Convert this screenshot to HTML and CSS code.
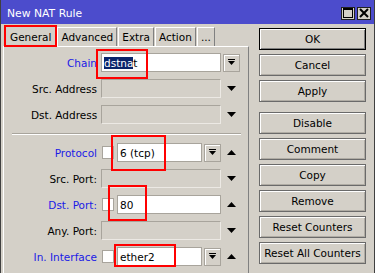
FILE: index.html
```html
<!DOCTYPE html>
<html>
<head>
<meta charset="utf-8">
<link rel="stylesheet" href="styles.css">
</head>
<body>
<div class="window">
  <div class="titlebar">
    <span class="title">New NAT Rule</span>
    <div class="tb-btns">
      <span class="tb-btn"><svg width="10" height="10" viewBox="0 0 10 10"><rect x="0.5" y="0.5" width="9" height="9" fill="none" stroke="#000" stroke-width="1"/><rect x="0" y="0" width="10" height="2" fill="#000"/></svg></span>
      <span class="tb-btn"><svg width="10" height="10" viewBox="0 0 10 10"><path d="M1 1 L9 9 M9 1 L1 9" stroke="#000" stroke-width="2"/></svg></span>
    </div>
  </div>
  <div class="main">
    <div class="left">
      <div class="tabs">
        <div class="tab active">General</div>
        <div class="tab">Advanced</div>
        <div class="tab">Extra</div>
        <div class="tab">Action</div>
        <div class="tab">...</div>
      </div>
      <div class="panel">
        <div class="row">
          <span class="lbl blue">Chain</span>
          <div class="field"><div class="input white"><span class="sel">dstna</span>t</div></div>
          <div class="ind"><span class="ddbtn"><svg width="7" height="7" viewBox="0 0 7 7"><rect x="0" y="0" width="7" height="1" fill="#000"/><polygon points="0,2 7,2 3.5,6" fill="#000"/></svg></span></div>
        </div>
        <div class="row">
          <span class="lbl">Src. Address</span>
          <div class="field"><div class="input dis"></div></div>
          <div class="ind"><svg class="arr" width="9" height="5" viewBox="0 0 9 5"><polygon points="0,0 9,0 4.5,5" fill="#000"/></svg></div>
        </div>
        <div class="row">
          <span class="lbl">Dst. Address</span>
          <div class="field"><div class="input dis"></div></div>
          <div class="ind"><svg class="arr" width="9" height="5" viewBox="0 0 9 5"><polygon points="0,0 9,0 4.5,5" fill="#000"/></svg></div>
        </div>
        <div class="sep"></div>
        <div class="row">
          <span class="lbl blue">Protocol</span>
          <div class="field"><span class="chk"></span><div class="input white">6 (tcp)</div><span class="ddbtn"><svg width="7" height="7" viewBox="0 0 7 7"><rect x="0" y="0" width="7" height="1" fill="#000"/><polygon points="0,2 7,2 3.5,6" fill="#000"/></svg></span></div>
          <div class="ind"><svg class="arr" width="9" height="5" viewBox="0 0 9 5"><polygon points="0,5 9,5 4.5,0" fill="#000"/></svg></div>
        </div>
        <div class="row">
          <span class="lbl">Src. Port:</span>
          <div class="field"><div class="input dis"></div></div>
          <div class="ind"><svg class="arr" width="9" height="5" viewBox="0 0 9 5"><polygon points="0,0 9,0 4.5,5" fill="#000"/></svg></div>
        </div>
        <div class="row">
          <span class="lbl blue">Dst. Port:</span>
          <div class="field"><span class="chk"></span><div class="input white">80</div></div>
          <div class="ind"><svg class="arr" width="9" height="5" viewBox="0 0 9 5"><polygon points="0,5 9,5 4.5,0" fill="#000"/></svg></div>
        </div>
        <div class="row">
          <span class="lbl">Any. Port:</span>
          <div class="field"><div class="input dis"></div></div>
          <div class="ind"><svg class="arr" width="9" height="5" viewBox="0 0 9 5"><polygon points="0,0 9,0 4.5,5" fill="#000"/></svg></div>
        </div>
        <div class="row">
          <span class="lbl blue">In. Interface</span>
          <div class="field"><span class="chk"></span><div class="input white">ether2</div><span class="ddbtn"><svg width="7" height="7" viewBox="0 0 7 7"><rect x="0" y="0" width="7" height="1" fill="#000"/><polygon points="0,2 7,2 3.5,6" fill="#000"/></svg></span></div>
          <div class="ind"><svg class="arr" width="9" height="5" viewBox="0 0 9 5"><polygon points="0,5 9,5 4.5,0" fill="#000"/></svg></div>
        </div>
      </div>
    </div>
    <div class="buttons">
      <div class="btn default">OK</div>
      <div class="btn">Cancel</div>
      <div class="btn">Apply</div>
      <div class="btn spaced">Disable</div>
      <div class="btn">Comment</div>
      <div class="btn">Copy</div>
      <div class="btn">Remove</div>
      <div class="btn">Reset Counters</div>
      <div class="btn">Reset All Counters</div>
    </div>
  </div>
</div>
<div class="mark m-general"></div>
<div class="mark m-chain"></div>
<div class="mark m-proto"></div>
<div class="mark m-dport"></div>
<div class="mark m-iface"></div>
</body>
</html>
```

FILE: styles.css
```css
html, body {
  margin: 0;
  padding: 0;
  overflow: hidden;
}
body {
  font-family: "DejaVu Sans", sans-serif;
  font-size: 10.5px;
  color: #000;
  background: #d4d0c8;
}
.window {
  width: 375px;
  height: 273px;
  box-sizing: border-box;
  background: #d4d0c8;
  border-left: 1px solid #404040;
  border-right: 1px solid #404040;
  overflow: hidden;
}
.titlebar {
  height: 24px;
  box-sizing: border-box;
  background: #4c4ccc;
  color: #fff;
  display: flex;
  align-items: center;
  justify-content: space-between;
  padding: 2px 3px 0 6px;
}
.title {
  font-size: 10.8px;
}
.tb-btns {
  display: flex;
  gap: 2px;
}
.tb-btn {
  width: 14px;
  height: 13px;
  box-sizing: border-box;
  border: 1px solid #202020;
  background: #d4d0c8;
  display: flex;
  align-items: center;
  justify-content: center;
}
.main {
  display: flex;
  padding: 1px 0 0 2px;
}
.left {
  width: 246px;
  display: flex;
  flex-direction: column;
}
.tabs {
  display: flex;
  height: 21px;
  padding-left: 2px;
  align-items: flex-end;
  gap: 1px;
}
.tab {
  height: 19px;
  box-sizing: border-box;
  padding: 0 3px;
  border-top: 1px solid #fff;
  border-left: 1px solid #fff;
  border-right: 1px solid #808080;
  display: flex;
  align-items: center;
}
.tab.active {
  height: 21px;
  padding: 0 4px;
  margin-bottom: -1px;
  background: #d4d0c8;
  position: relative;
}
.panel {
  height: 240px;
  box-sizing: border-box;
  border-top: 1px solid #fff;
  border-left: 1px solid #fff;
  border-right: 1px solid #808080;
  padding: 6px 0 0 27px;
  display: flex;
  flex-direction: column;
  gap: 7px;
}
.row {
  display: flex;
  align-items: center;
  height: 19px;
}
.lbl {
  width: 66px;
  margin-right: 4px;
  text-align: right;
  white-space: nowrap;
  flex: none;
}
.lbl.blue {
  color: #1a1ae6;
}
.field {
  width: 120px;
  height: 19px;
  display: flex;
  align-items: center;
  flex: none;
}
.input {
  flex: 1;
  height: 19px;
  box-sizing: border-box;
  border: 1px solid #a8a49c;
  padding-left: 2px;
  display: flex;
  align-items: center;
  white-space: nowrap;
}
.input.white {
  background: #fff;
}
.input.dis {
  background: #d4d0c8;
  border-color: #a8a49c #ece9e4 #ece9e4 #a8a49c;
}
.sel {
  background: #0a246a;
  color: #fff;
}
.chk {
  width: 12px;
  height: 13px;
  box-sizing: border-box;
  border: 1px solid #a8a49c;
  background: #fff;
  margin: 0 3px 0 1px;
  flex: none;
}
.ddbtn {
  width: 17px;
  height: 18px;
  box-sizing: border-box;
  border: 1px solid #a8a49c;
  background: #d4d0c8;
  box-shadow: inset 1px 1px #fff;
  display: flex;
  align-items: center;
  justify-content: center;
  flex: none;
}
.field .ddbtn {
  margin-left: 2px;
}
.ind {
  width: 17px;
  margin-left: 2px;
  display: flex;
  align-items: center;
  justify-content: center;
  flex: none;
}
.sep {
  height: 0;
  border-top: 1px solid #a8a49c;
  border-bottom: 1px solid #fff;
  margin: 2px 0 1px -19px;
  width: 229px;
}
.buttons {
  width: 107px;
  margin-left: 10px;
  padding-top: 3px;
  display: flex;
  flex-direction: column;
  gap: 4px;
}
.btn {
  height: 22px;
  box-sizing: border-box;
  border: 1px solid #6a6a6a;
  box-shadow: inset 1px 1px #fff, inset -1px -1px #b0aca4;
  display: flex;
  align-items: center;
  justify-content: center;
  white-space: nowrap;
}
.btn.default {
  border: 1px solid #000;
  box-shadow: inset 1px 1px #fff, inset -1px -1px #808080;
}
.btn.spaced {
  margin-top: 6px;
}
.mark {
  position: absolute;
  border: 2px solid #f00;
  box-sizing: border-box;
}
.m-general { left: 4px; top: 25px; width: 53px; height: 22px; }
.m-chain { left: 96px; top: 49px; width: 52px; height: 30px; }
.m-proto { left: 111px; top: 135px; width: 55px; height: 36px; }
.m-dport { left: 108px; top: 185px; width: 39px; height: 36px; }
.m-iface { left: 114px; top: 244px; width: 62px; height: 23px; }
```
